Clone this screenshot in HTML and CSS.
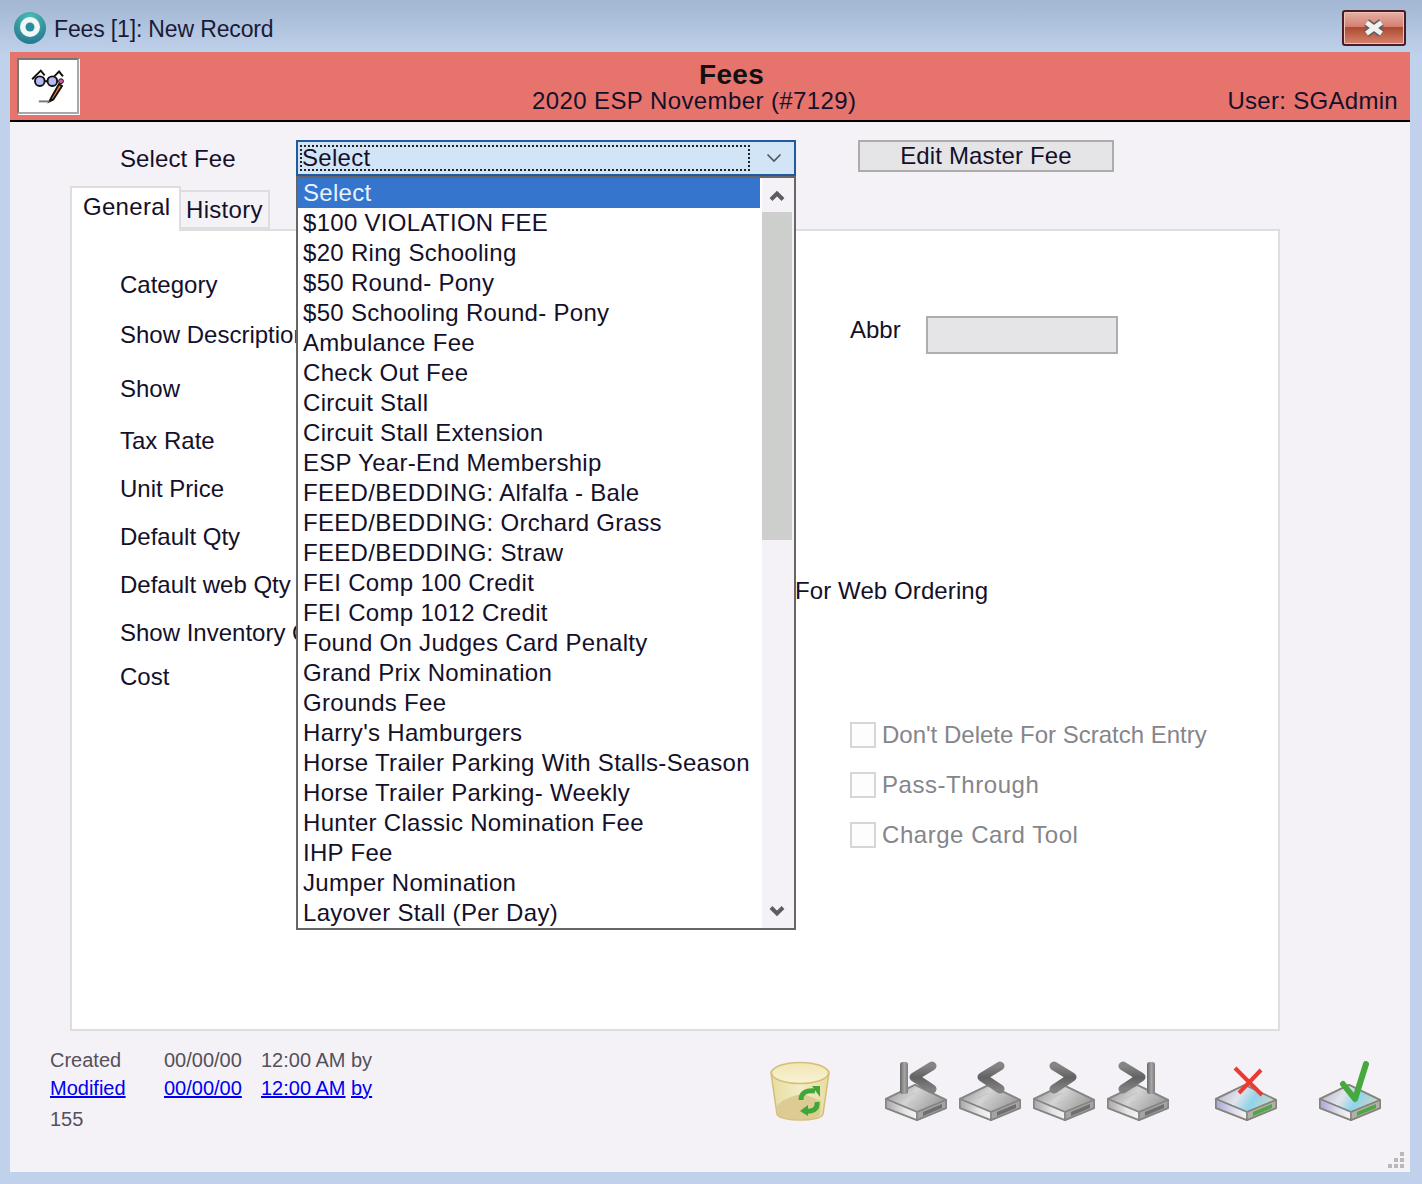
FILE: index.html
```html
<!DOCTYPE html>
<html lang="en">
<head>
<meta charset="utf-8">
<title>Fees [1]: New Record</title>
<link rel="stylesheet" href="styles.css">
</head>
<body>
<svg class="sprite" width="0" height="0" aria-hidden="true">
  <defs>
    <linearGradient id="gBar" x1="0" x2="1" y1="0" y2="0"><stop offset="0" stop-color="#686868"/><stop offset=".55" stop-color="#a6a6a6"/><stop offset="1" stop-color="#7c7c7c"/></linearGradient>
    <linearGradient id="gChev" x1="0" x2="0" y1="0" y2="1"><stop offset="0" stop-color="#858585"/><stop offset=".5" stop-color="#626262"/><stop offset="1" stop-color="#808080"/></linearGradient>
    <linearGradient id="gTop" x1="0" x2="1" y1="0" y2="0.4"><stop offset="0" stop-color="#8a8a8a"/><stop offset=".5" stop-color="#d4d4d4"/><stop offset="1" stop-color="#a0a0a0"/></linearGradient>
    <linearGradient id="gFront" x1="0" x2="1" y1="0" y2="0"><stop offset="0" stop-color="#a8a8a8"/><stop offset=".6" stop-color="#e4e4e4"/><stop offset="1" stop-color="#f4f4f4"/></linearGradient>
    <linearGradient id="gFrontC" x1="0" x2="1" y1="0" y2="0"><stop offset="0" stop-color="#a9a7d8"/><stop offset=".6" stop-color="#e0e0ee"/><stop offset="1" stop-color="#f4f4f4"/></linearGradient>
    <linearGradient id="gTopC" x1="0" x2="1" y1="0" y2="0.3"><stop offset="0" stop-color="#a9a8c8"/><stop offset=".45" stop-color="#e4e4ec"/><stop offset=".72" stop-color="#8fd4ea"/><stop offset="1" stop-color="#c5d5cc"/></linearGradient>
    <linearGradient id="gBin" x1="0" x2="0" y1="0" y2="1"><stop offset="0" stop-color="#f3e6b4"/><stop offset="1" stop-color="#f8f2d6"/></linearGradient>
    <linearGradient id="gBody" x1="0" x2="1" y1="0" y2="0"><stop offset="0" stop-color="#e8dca0"/><stop offset=".5" stop-color="#f3ecc4"/><stop offset="1" stop-color="#e8dca0"/></linearGradient>
    <radialGradient id="gRing" cx=".5" cy=".2" r=".9"><stop offset="0" stop-color="#4fc0b5"/><stop offset="1" stop-color="#1f6f8c"/></radialGradient>
    <symbol id="drive" viewBox="0 0 62 60">
      <path d="M1 38 30 24 61 39 61 47 32 59 1 47Z" fill="#b5b5b5" stroke="#8b8b8b" stroke-width="2" stroke-linejoin="round"/>
      <path d="M1 38 30 24 61 39 32 51Z" fill="url(#gTop)" stroke="#858585" stroke-width="1.5" stroke-linejoin="round"/>
      <path d="M14 39 30 32M24 43 40 36" stroke="#c2c2c2" stroke-width="1"/>
      <path d="M1 38 32 51 32 59 1 47Z" fill="url(#gFront)" stroke="#858585" stroke-width="1.5"/>
      <path d="M32 51 61 39 61 47 32 59Z" fill="#a4a4a4" stroke="#858585" stroke-width="1.5"/>
      <path d="M38 51 57 43 57 47 38 55Z" fill="#6f6f6f"/>
    </symbol>
    <symbol id="driveC" viewBox="0 0 62 60">
      <path d="M1 38 30 24 61 39 61 47 32 59 1 47Z" fill="#b5b5b5" stroke="#85857d" stroke-width="2" stroke-linejoin="round"/>
      <path d="M1 38 30 24 61 39 32 51Z" fill="url(#gTopC)" stroke="#85857d" stroke-width="1.5" stroke-linejoin="round"/>
      <path d="M1 38 32 51 32 59 1 47Z" fill="url(#gFrontC)" stroke="#85857d" stroke-width="1.5"/>
      <path d="M32 51 61 39 61 47 32 59Z" fill="#b0b0ac" stroke="#85857d" stroke-width="1.5"/>
      <path d="M38 51 57 43 57 47 38 55Z" fill="#4ca93f"/>
    </symbol>
  </defs>
</svg>

<div class="window">
  <header class="titlebar">
    <svg class="app-icon" viewBox="0 0 32 32" aria-hidden="true">
      <circle cx="16" cy="16" r="16" fill="url(#gRing)"/>
      <circle cx="16" cy="15" r="10" fill="#f2f7f6"/>
      <circle cx="16" cy="15" r="4.5" fill="#2b8ca0"/>
    </svg>
    <span class="title-text">Fees [1]: New Record</span>
    <button class="close-btn" type="button" aria-label="Close">
      <svg viewBox="0 0 24 18" aria-hidden="true">
        <path d="M4.5 3.5 19.5 14.5M19.5 3.5 4.5 14.5" stroke="#5c5c5c" stroke-width="8" fill="none"/>
        <path d="M4.5 3.5 19.5 14.5M19.5 3.5 4.5 14.5" stroke="#f1f1f1" stroke-width="5" fill="none"/>
      </svg>
    </button>
  </header>

  <main class="client">
    <section class="banner">
      <div class="logo-box">
        <svg viewBox="0 0 59 54" aria-hidden="true">
          <path d="M13 20 22 11 26 16" fill="none" stroke="#111" stroke-width="2"/>
          <path d="M36 17 41 12 45 17" fill="none" stroke="#111" stroke-width="2"/>
          <path d="M26 22H30" stroke="#111" stroke-width="2"/>
          <circle cx="21" cy="22" r="5" fill="#b9b9f2" stroke="#111" stroke-width="2"/>
          <circle cx="34" cy="22" r="5" fill="#b9b9f2" stroke="#111" stroke-width="2"/>
          <path d="M41 25 33 39 31 43 35 41 44 27Z" fill="#ef8a36" stroke="#111" stroke-width="2"/>
          <circle cx="43" cy="22" r="2.5" fill="#d95aa0" stroke="#111" stroke-width="1"/>
          <path d="M20 43H31" stroke="#777" stroke-width="2"/>
        </svg>
      </div>
      <div class="banner-center">
        <div class="banner-title">Fees</div>
        <div class="banner-sub">2020 ESP November (#7129)</div>
      </div>
      <div class="banner-user">User: SGAdmin</div>
    </section>

    <section class="select-row">
      <label class="select-label">Select Fee</label>
      <div class="combo">
        <div class="combo-box">
          <span class="combo-focus">Select</span>
          <svg class="combo-arrow" viewBox="0 0 16 10" aria-hidden="true"><path d="M1.5 1.5 8 8 14.5 1.5" fill="none" stroke="#555" stroke-width="1.6"/></svg>
        </div>
        <div class="list">
          <ul class="list-items">
            <li class="selected">Select</li>
            <li>$100 VIOLATION FEE</li>
            <li>$20 Ring Schooling</li>
            <li>$50 Round- Pony</li>
            <li>$50 Schooling Round- Pony</li>
            <li>Ambulance Fee</li>
            <li>Check Out Fee</li>
            <li>Circuit Stall</li>
            <li>Circuit Stall Extension</li>
            <li>ESP Year-End Membership</li>
            <li>FEED/BEDDING: Alfalfa - Bale</li>
            <li>FEED/BEDDING: Orchard Grass</li>
            <li>FEED/BEDDING: Straw</li>
            <li>FEI Comp 100 Credit</li>
            <li>FEI Comp 1012 Credit</li>
            <li>Found On Judges Card Penalty</li>
            <li>Grand Prix Nomination</li>
            <li>Grounds Fee</li>
            <li>Harry's Hamburgers</li>
            <li>Horse Trailer Parking With Stalls-Season</li>
            <li>Horse Trailer Parking- Weekly</li>
            <li>Hunter Classic Nomination Fee</li>
            <li>IHP Fee</li>
            <li>Jumper Nomination</li>
            <li>Layover Stall (Per Day)</li>
          </ul>
          <div class="scrollbar">
            <svg class="scroll-btn" viewBox="0 0 16 12" aria-hidden="true"><path d="M2 9.5 8 3.5 14 9.5" fill="none" stroke="#5f5b63" stroke-width="4"/></svg>
            <div class="scroll-track"><div class="scroll-thumb"></div></div>
            <svg class="scroll-btn" viewBox="0 0 16 12" aria-hidden="true"><path d="M2 2.5 8 8.5 14 2.5" fill="none" stroke="#5f5b63" stroke-width="4"/></svg>
          </div>
        </div>
      </div>
      <button class="master-btn" type="button">Edit Master Fee</button>
    </section>

    <section class="tabs">
      <div class="tab-strip">
        <div class="tab tab-active">General</div>
        <div class="tab tab-idle">History</div>
      </div>
      <div class="tab-panel">
        <div class="labels">
          <div>Category</div>
          <div>Show Description</div>
          <div>Show</div>
          <div>Tax Rate</div>
          <div>Unit Price</div>
          <div>Default Qty</div>
          <div>Default web Qty</div>
          <div>Show Inventory Qty</div>
          <div>Cost</div>
        </div>
        <div class="side">
          <div class="abbr-row"><span>Abbr</span><div class="abbr-input"></div></div>
          <div class="web-order">For Web Ordering</div>
          <div class="checks">
            <div class="check check-tight"><span class="check-box"></span>Don't Delete For Scratch Entry</div>
            <div class="check"><span class="check-box"></span>Pass-Through</div>
            <div class="check"><span class="check-box"></span>Charge Card Tool</div>
          </div>
        </div>
      </div>
    </section>

    <footer class="footer">
      <div class="meta">
        <span>Created</span><span>00/00/00</span><span>12:00 AM</span><span>by</span>
        <a href="#">Modified</a><a href="#">00/00/00</a><a href="#">12:00 AM</a><a href="#">by</a>
        <span>155</span>
      </div>
      <div class="actions">
        <svg class="ico bin" viewBox="0 0 60 60" aria-hidden="true">
          <path d="M1 12 C1 1 59 1 59 12 L53 53 C52 61 9 61 7 53Z" fill="url(#gBody)" stroke="#d3bf76" stroke-width="1.5"/>
          <path d="M6 46 C12 38 24 34 34 33 L51 40 50 54 C45 60 13 60 8 54Z" fill="#dccb92"/>
          <ellipse cx="30" cy="12" rx="28.5" ry="10.5" fill="url(#gBin)" stroke="#d3bf76" stroke-width="1.5"/>
          <path d="M31 39C31 31 37 29 45 30" fill="none" stroke="#3fa738" stroke-width="5"/>
          <path d="M42 25H50V36Z" fill="#3fa738"/>
          <path d="M47 41C48 49 42 51 34 50" fill="none" stroke="#3fa738" stroke-width="5"/>
          <path d="M38 44 30 50 38 55Z" fill="#3fa738"/>
        </svg>
        <svg class="ico first" viewBox="0 0 62 60" aria-hidden="true">
          <use href="#drive"/>
          <rect x="15" y="1" width="8" height="32" rx="2.5" fill="url(#gBar)"/>
          <path d="M47 5 29 16 47 28" fill="none" stroke="url(#gChev)" stroke-width="9" stroke-linejoin="round" stroke-linecap="round"/>
        </svg>
        <svg class="ico" viewBox="0 0 62 60" aria-hidden="true">
          <use href="#drive"/>
          <path d="M41 5 23 16 41 28" fill="none" stroke="url(#gChev)" stroke-width="9" stroke-linejoin="round" stroke-linecap="round"/>
        </svg>
        <svg class="ico" viewBox="0 0 62 60" aria-hidden="true">
          <use href="#drive"/>
          <path d="M21 5 39 16 21 28" fill="none" stroke="url(#gChev)" stroke-width="9" stroke-linejoin="round" stroke-linecap="round"/>
        </svg>
        <svg class="ico" viewBox="0 0 62 60" aria-hidden="true">
          <use href="#drive"/>
          <rect x="40" y="1" width="8" height="32" rx="2.5" fill="url(#gBar)"/>
          <path d="M16 5 34 16 16 28" fill="none" stroke="url(#gChev)" stroke-width="9" stroke-linejoin="round" stroke-linecap="round"/>
        </svg>
        <svg class="ico cancel" viewBox="0 0 62 60" aria-hidden="true">
          <use href="#driveC"/>
          <path d="M20 7 47 34M46 9 24 32" stroke="#ec3a30" stroke-width="4" fill="none"/>
        </svg>
        <svg class="ico ok" viewBox="0 0 62 60" aria-hidden="true">
          <use href="#driveC"/>
          <path d="M24 23 36 38 47 3" stroke="#45aa3e" stroke-width="6" fill="none" stroke-linejoin="round" stroke-linecap="round"/>
        </svg>
      </div>
      <svg class="grip" viewBox="0 0 16 16" aria-hidden="true">
        <path d="M12 0h4v4h-4zM6 6h4v4H6zM12 6h4v4h-4zM0 12h4v4H0zM6 12h4v4H6zM12 12h4v4h-4z" fill="#b9b9b9"/>
      </svg>
    </footer>
  </main>
</div>
</body>
</html>
```
FILE: styles.css
```css
* { box-sizing: border-box; }
html, body { margin: 0; padding: 0; }
body {
  width: 1422px;
  height: 1184px;
  overflow: hidden;
  background: linear-gradient(#a3b6d2 0, #c0d2eb 56px, #c0d2eb 100%);
  font-family: "Liberation Sans", Arial, sans-serif;
  font-size: 24px;
  letter-spacing: 0.3px;
  color: #14102a;
}
.sprite { position: absolute; }
.window { height: 1184px; display: flex; flex-direction: column; }

.titlebar { height: 52px; flex: none; display: flex; align-items: center; padding: 4px 16px 0 14px; }
.app-icon { width: 32px; height: 32px; }
.title-text { margin: 2px 0 0 8px; flex: 1; color: #1a1a38; font-size: 23px; letter-spacing: -0.15px; }
.close-btn {
  width: 64px; height: 36px; padding: 0;
  border: 2px solid #4a1c28; border-radius: 3px;
  background: linear-gradient(#e5b1a6 0, #d57f70 46%, #ab4a2f 47%, #d6836f 100%);
  box-shadow: inset 0 0 0 1px #eec3b8;
  display: flex; align-items: center; justify-content: center;
}
.close-btn svg { width: 24px; height: 18px; }

.client {
  flex: 1; margin: 0 12px 12px 10px;
  background: #f4f2f7;
  display: flex; flex-direction: column;
  position: relative;
}

.banner {
  height: 70px; flex: none;
  background: #e6736c;
  border-bottom: 2px solid #000;
  display: flex;
  padding: 6px 12px 0 7px;
}
.logo-box {
  width: 62px; height: 56px; flex: none;
  background: #fff;
  border-style: solid;
  border-width: 2px;
  border-color: #777 #a8a8a8 #a8a8a8 #777;
  box-shadow: 1px 1px 0 #fff;
}
.logo-box svg { width: 58px; height: 52px; display: block; }
.banner-center { flex: 1; display: flex; flex-direction: column; padding-left: 453px; margin-top: 2px; }
.banner-title { font-size: 28px; font-weight: 700; line-height: 30px; padding-left: 167px; color: #111; }
.banner-sub { line-height: 26px; white-space: nowrap; margin-top: -2px; letter-spacing: 0.4px; }
.banner-user { align-self: flex-end; line-height: 26px; margin-bottom: 6px; white-space: nowrap; }

.select-row { height: 64px; flex: none; display: flex; align-items: flex-start; padding: 18px 0 0 110px; }
.select-label { width: 176px; line-height: 38px; letter-spacing: 0.1px; }
.combo { width: 500px; position: relative; }
.combo-box {
  height: 36px; border: 2px solid #1f5a9e; background: #d1e5f6;
  display: flex; align-items: center; padding: 0 12px 0 4px;
}
.combo-focus {
  flex: 1; height: 22px; line-height: 22px;
  outline: 2px dotted #222; outline-offset: 0;
  margin-right: 18px;
}
.combo-arrow { width: 16px; height: 10px; }

.list {
  position: absolute; left: 0; top: 36px; width: 500px; height: 754px;
  border: 2px solid #666; background: #fff;
  display: flex; z-index: 5;
}
.list-items { list-style: none; margin: 0; padding: 0; flex: 1; overflow: hidden; }
.list-items li { height: 30px; line-height: 30px; padding-left: 5px; white-space: nowrap; color: #14102a; }
.list-items li.selected { background: #3575cd; color: #e8f2fc; margin-right: 2px; }
.scrollbar { width: 32px; flex: none; background: #f4f2f7; display: flex; flex-direction: column; align-items: center; padding: 12px 2px 11px 0; }
.scroll-btn { width: 16px; height: 12px; flex: none; }
.scroll-track { flex: 1; width: 100%; padding-top: 10px; }
.scroll-thumb { height: 328px; background: #cdcfcc; }

.master-btn {
  width: 256px; height: 32px; margin-left: 62px; padding: 0;
  background: #e5e4e7; border: 2px solid #acacac;
  font: inherit; letter-spacing: 0.15px; color: #14102a;
}

.tabs { width: 1210px; margin-left: 60px; flex: none; }
.tab-strip { height: 44px; display: flex; align-items: flex-end; position: relative; z-index: 1; }
.tab { border: 2px solid #dedede; border-bottom: none; }
.tab-active { width: 111px; height: 45px; margin-bottom: -1px; background: #fff; padding: 1px 0 0 11px; line-height: 36px; }
.tab-idle { width: 89px; height: 39px; border-left: none; padding: 2px 0 0 5px; line-height: 32px; margin-bottom: 1px; border-bottom: 2px solid #dedede; }
.tab-panel {
  height: 802px; margin-top: -1px;
  border: 2px solid #dedede;
  background: #fff;
  display: flex;
}
.labels {
  width: 723px; flex: none;
  padding: 39px 0 0 48px;
  display: grid;
  grid-template-rows: 50px 54px 52px 48px 48px 48px 48px 44px 30px;
  align-content: start;
  line-height: 30px;
  letter-spacing: 0;
  white-space: nowrap;
}
.side { flex: 1; }
.abbr-row { display: flex; gap: 25px; padding: 85px 0 0 55px; height: 123px; }
.abbr-row span { line-height: 28px; letter-spacing: 0; }
.abbr-input { width: 192px; height: 38px; background: #e5e4e7; border: 2px solid #aeaeb0; }
.web-order { margin-top: 222px; line-height: 30px; letter-spacing: 0.1px; }
.checks { padding: 0 0 0 55px; margin-top: 114px; display: flex; flex-direction: column; gap: 20px; }
.check { height: 30px; display: flex; align-items: center; gap: 6px; color: #85858a; white-space: nowrap; letter-spacing: 0.55px; }
.check-tight { letter-spacing: 0; }
.check-box { width: 26px; height: 26px; border: 2px solid #d6d6d6; background: #fdfdfe; }

.footer { flex: 1; display: flex; align-items: flex-start; font-size: 20px; letter-spacing: 0; position: relative; }
.meta {
  margin: 15px 0 0 40px;
  display: grid; grid-template-columns: 114px 97px 90px auto;
  grid-template-rows: 28px 31px 28px; line-height: 28px;
  color: #55505a;
}
.meta a { color: #0000f0; text-decoration: underline; }
.actions { margin-left: auto; margin-right: 29px; margin-top: 30px; display: flex; gap: 12px; align-items: flex-start; }
.ico { width: 62px; height: 60px; display: block; filter: blur(0.7px); }
.bin { width: 60px; margin-right: 43px; }
.cancel { margin-left: 34px; }
.ok { margin-left: 30px; }
.grip { width: 16px; height: 16px; position: absolute; right: 6px; bottom: 4px; }
```
